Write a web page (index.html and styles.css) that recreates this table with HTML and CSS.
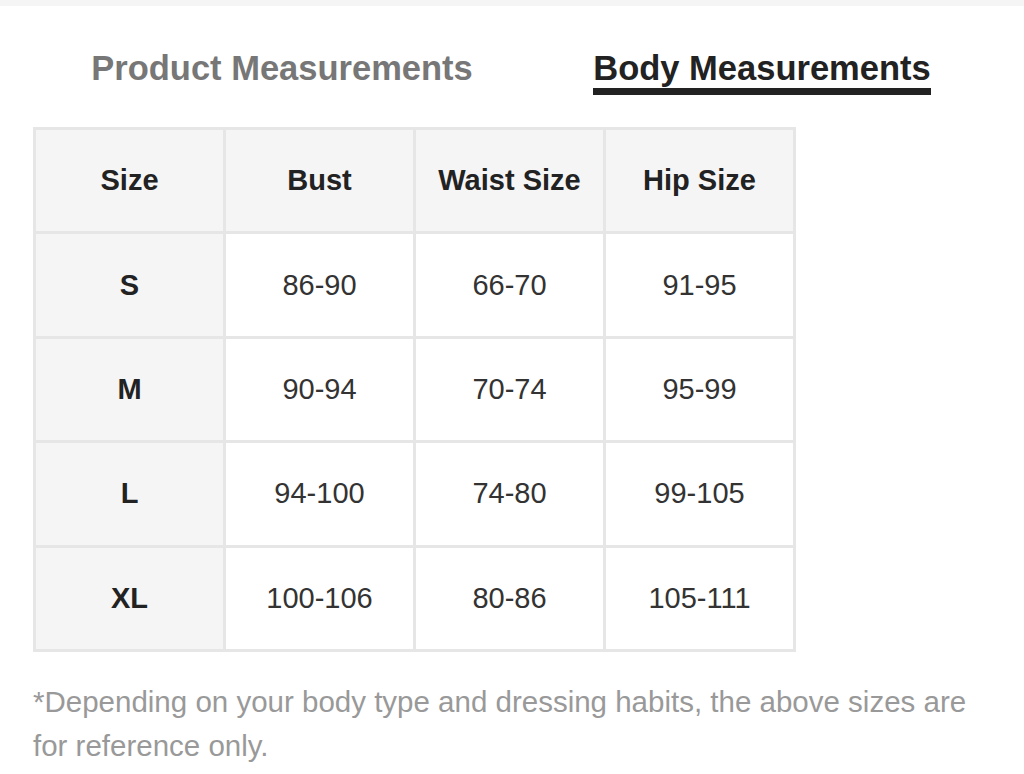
FILE: index.html
```html
<!DOCTYPE html>
<html>
<head>
<meta charset="utf-8">
<link rel="stylesheet" href="styles.css">
</head>
<body>
<div class="topbar"></div>
<div class="tabs">
  <div class="tab"><span class="tab-label">Product Measurements</span></div>
  <div class="tab active"><span class="tab-label">Body Measurements</span></div>
</div>
<div class="content">
  <table class="size-table">
    <tr class="head">
      <th>Size</th><th>Bust</th><th>Waist Size</th><th>Hip Size</th>
    </tr>
    <tr><th>S</th><td>86-90</td><td>66-70</td><td>91-95</td></tr>
    <tr><th>M</th><td>90-94</td><td>70-74</td><td>95-99</td></tr>
    <tr><th>L</th><td>94-100</td><td>74-80</td><td>99-105</td></tr>
    <tr><th>XL</th><td>100-106</td><td>80-86</td><td>105-111</td></tr>
  </table>
  <p class="note">*Depending on your body type and dressing habits, the above sizes are for reference only.</p>
</div>
</body>
</html>
```
FILE: styles.css
```css
html, body {
  margin: 0;
  padding: 0;
  background: #ffffff;
  font-family: "Liberation Sans", Arial, sans-serif;
}
.topbar {
  height: 6px;
  background: #f5f5f5;
}
.tabs {
  display: flex;
  padding-left: 42px;
  padding-top: 42px;
  height: 90px;
  box-sizing: border-box;
}
.tab {
  width: 480px;
  text-align: center;
}
.tab-label {
  display: inline-block;
  font-size: 34.5px;
  font-weight: bold;
  line-height: 40px;
  color: #777777;
}
.tab.active .tab-label {
  color: #222222;
  border-bottom: 7px solid #222222;
  padding-bottom: 0;
}
.content {
  padding: 31px 33px 0 33px;
}
.size-table {
  border-collapse: collapse;
  width: 763px;
  table-layout: fixed;
}
.size-table th,
.size-table td {
  border: 3px solid #e6e6e6;
  height: 101.4px;
  padding: 0;
  text-align: center;
  font-size: 29px;
  color: #333333;
}
.size-table th {
  font-weight: bold;
  color: #222222;
  background: #f5f5f5;
}
.size-table td {
  background: #ffffff;
  font-weight: normal;
}
.note {
  margin: 28px 0 0 0;
  font-size: 29.5px;
  line-height: 44px;
  color: #999999;
}
```
